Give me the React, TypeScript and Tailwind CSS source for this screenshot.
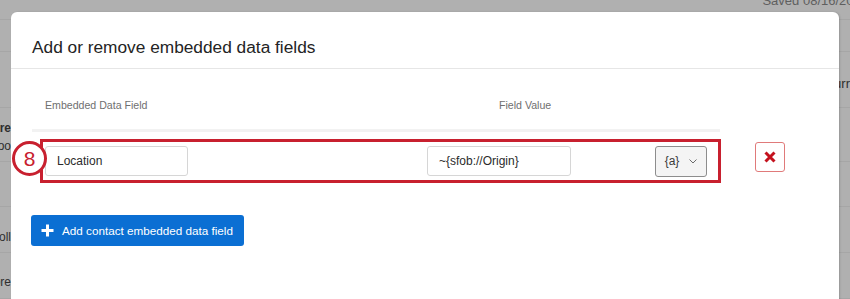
import React from "react";

const font = { fontFamily: '"Liberation Sans", Arial, sans-serif' };

// rows of the survey page dimmed behind the dialog
const bgRows = [
  { h: "h-[20px]", left: "", right: "", pad: "" },
  { h: "h-[32px]", left: "", right: "", pad: "" },
  { h: "h-[56px]", left: "", right: "urr", pad: "" },
  { h: "h-[54px]", left: "Score", sub: "Proo", right: "", pad: "pt-[4px]" },
  { h: "h-[45px]", left: "", right: "", pad: "" },
  { h: "h-[46px]", left: "Coll", right: "", pad: "pt-[14px]" },
  { h: "h-[46px]", left: "Score", right: "", pad: "pt-[12px]" },
];

const BackgroundPage: React.FC = () => (
  <div className="flex flex-col w-full">
    <div className="h-0 flex justify-end">
      <span className="mt-[-9px] text-[13px] text-[#5f5f5f] whitespace-nowrap mr-[-18px]">
        Saved 08/16/2021
      </span>
    </div>
    {bgRows.map((r, i) => (
      <div
        key={i}
        className={`${r.h} ${r.pad} flex items-center justify-between border-b border-[#a6a6a6]`}
      >
        <div className="flex flex-col items-end w-[11px] overflow-visible text-[12px] leading-[18px] text-[#2e2e2e] whitespace-nowrap">
          {r.left && <span className={r.sub ? "font-bold" : ""}>{r.left}</span>}
          {r.sub && <span>{r.sub}</span>}
        </div>
        <span className="text-[13px] text-[#2e2e2e] self-start mt-[22px] whitespace-nowrap">{r.right}</span>
      </div>
    ))}
  </div>
);

const TextInput: React.FC<{ value: string; className?: string }> = ({ value, className }) => (
  <div
    className={`h-[30px] flex items-center px-[11px] bg-white border border-[#d6d6d6] rounded-[3px] text-[12px] text-[#2b2b2b] ${className ?? ""}`}
  >
    {value}
  </div>
);

const App: React.FC = () => {
  return (
    <div className="relative w-[850px] h-[299px] bg-[#b0b0b0] overflow-hidden" style={font}>
      {/* dimmed page */}
      <div className="absolute inset-0">
        <BackgroundPage />
      </div>

      {/* dialog */}
      <div className="absolute left-[11px] top-[12px] w-[828px] h-[320px] bg-white rounded-t-[6px] shadow-[1px_0_2px_rgba(0,0,0,0.15)]">
        <div className="h-[57px] pl-[21px] pt-[25px] border-b border-[#e6e6e6]">
          <h2 className="text-[17.3px] leading-[20px] text-[#242424]">
            Add or remove embedded data fields
          </h2>
        </div>

        <div className="pl-[21px]">
          {/* column headers */}
          <div className="w-[688px] h-[63px] flex items-end pb-[15px] border-b-[3px] border-[#f2f2f2] text-[10.6px] text-[#6f6f6f]">
            <span className="pl-[13px] w-[467px]">Embedded Data Field</span>
            <span>Field Value</span>
          </div>

          {/* field row */}
          <div className="flex items-center mt-[7px]">
            <div className="relative ml-[8px] w-[681px] h-[44px] border-[3px] border-[#c8202f] flex items-center pl-[2px] pr-[11px]">
              <TextInput value="Location" className="w-[143px]" />
              <TextInput value="~{sfob://Origin}" className="w-[144px] ml-[239px]" />
              <button className="ml-auto w-[52px] h-[31px] flex items-center justify-center gap-[10px] bg-[#f4f4f4] border-[1.5px] border-[#8d8d8d] rounded-[3px] text-[12px] text-[#3a3a3a]">
                <span>{"{a}"}</span>
                <svg width="8" height="5" viewBox="0 0 8 5" fill="none">
                  <path d="M0.5 0.5L4 4L7.5 0.5" stroke="#6b6b6b" strokeWidth="1" />
                </svg>
              </button>
              {/* step badge */}
              <div className="absolute left-[-31px] top-[-1px] w-[35px] h-[35px] rounded-full border-[3px] border-[#c8202f] bg-white flex items-center justify-center text-[21px] text-[#c8202f]">
                8
              </div>
            </div>
            <button className="ml-[34px] mt-[-8px] w-[30px] h-[30px] flex items-center justify-center border border-[#e07a7a] rounded-[3px] bg-white">
              <svg width="12" height="12" viewBox="0 0 12 12">
                <path d="M1.5 1.5L10.5 10.5M10.5 1.5L1.5 10.5" stroke="#c4121e" strokeWidth="3" />
              </svg>
            </button>
          </div>

          {/* add button */}
          <button className="mt-[32px] ml-[-1px] w-[213px] h-[31px] flex items-center gap-[8px] pl-[10px] bg-[#0b6fd3] rounded-[3px] text-white text-[11.7px]">
            <svg width="13" height="13" viewBox="0 0 13 13">
              <path d="M6.5 0.5V12.5M0.5 6.5H12.5" stroke="#ffffff" strokeWidth="3" />
            </svg>
            <span>Add contact embedded data field</span>
          </button>
        </div>
      </div>
    </div>
  );
};

export default App;
